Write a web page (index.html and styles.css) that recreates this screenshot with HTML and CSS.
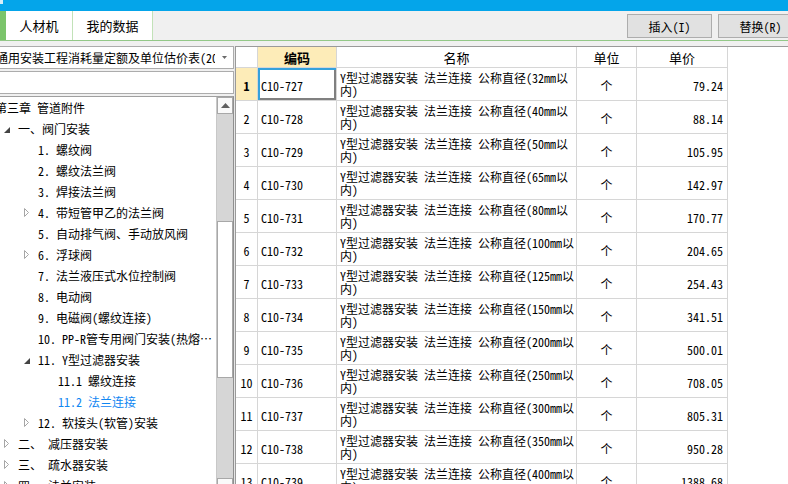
FILE: index.html
```html
<!DOCTYPE html>
<html lang="zh-CN">
<head>
<meta charset="utf-8">
<title>定额</title>
<link rel="stylesheet" href="styles.css">
</head>
<body>
<div class="app">
  <div class="titlebar"><span class="tb-mark"></span></div>
  <div class="tabbar">
    <div class="tab-accent"></div>
    <div class="tab tab-rcj">人材机</div>
    <div class="tab tab-my">我的数据</div>
    <div class="spacer"></div>
    <button class="btn btn-insert">插入(I)</button>
    <button class="btn btn-replace">替换(R)</button>
  </div>
  <div class="main">
    <div class="left">
      <div class="combo">
        <span class="combo-text">通用安装工程消耗量定额及单位估价表(2020)</span>
        <svg class="combo-arrow" width="5" height="3" viewBox="0 0 5 3"><polygon points="0,0 5,0 2.5,3" fill="#6a6a6a"/></svg>
      </div>
      <div class="search"></div>
      <div class="tree">
        <div class="tree-list">
          <div class="node lv0"><span class="txt">第三章 管道附件</span></div>
          <div class="node lv1"><span class="arw"><svg width="6" height="6" viewBox="0 0 6 6" class="exp"><polygon points="6,0 6,6 0,6" fill="#444"/></svg></span><span class="txt">一、阀门安装</span></div>
          <div class="node lv2"><span class="arw"></span><span class="txt">1. 螺纹阀</span></div>
          <div class="node lv2"><span class="arw"></span><span class="txt">2. 螺纹法兰阀</span></div>
          <div class="node lv2"><span class="arw"></span><span class="txt">3. 焊接法兰阀</span></div>
          <div class="node lv2"><span class="arw"><svg width="5" height="9" viewBox="0 0 5 9"><polygon points="0.5,0.5 4.5,4.5 0.5,8.5" fill="#fff" stroke="#a6a6a6"/></svg></span><span class="txt">4. 带短管甲乙的法兰阀</span></div>
          <div class="node lv2"><span class="arw"></span><span class="txt">5. 自动排气阀、手动放风阀</span></div>
          <div class="node lv2"><span class="arw"><svg width="5" height="9" viewBox="0 0 5 9"><polygon points="0.5,0.5 4.5,4.5 0.5,8.5" fill="#fff" stroke="#a6a6a6"/></svg></span><span class="txt">6. 浮球阀</span></div>
          <div class="node lv2"><span class="arw"></span><span class="txt">7. 法兰液压式水位控制阀</span></div>
          <div class="node lv2"><span class="arw"></span><span class="txt">8. 电动阀</span></div>
          <div class="node lv2"><span class="arw"></span><span class="txt">9. 电磁阀(螺纹连接)</span></div>
          <div class="node lv2"><span class="arw"></span><span class="txt">10. PP-R管专用阀门安装(热熔…</span></div>
          <div class="node lv2"><span class="arw"><svg width="6" height="6" viewBox="0 0 6 6" class="exp"><polygon points="6,0 6,6 0,6" fill="#444"/></svg></span><span class="txt">11. Y型过滤器安装</span></div>
          <div class="node lv3"><span class="arw"></span><span class="txt">11.1 螺纹连接</span></div>
          <div class="node lv3 selected"><span class="arw"></span><span class="txt">11.2 法兰连接</span></div>
          <div class="node lv2"><span class="arw"><svg width="5" height="9" viewBox="0 0 5 9"><polygon points="0.5,0.5 4.5,4.5 0.5,8.5" fill="#fff" stroke="#a6a6a6"/></svg></span><span class="txt">12. 软接头(软管)安装</span></div>
          <div class="node lv1"><span class="arw"><svg width="5" height="9" viewBox="0 0 5 9"><polygon points="0.5,0.5 4.5,4.5 0.5,8.5" fill="#fff" stroke="#a6a6a6"/></svg></span><span class="txt">二、 减压器安装</span></div>
          <div class="node lv1"><span class="arw"><svg width="5" height="9" viewBox="0 0 5 9"><polygon points="0.5,0.5 4.5,4.5 0.5,8.5" fill="#fff" stroke="#a6a6a6"/></svg></span><span class="txt">三、 疏水器安装</span></div>
          <div class="node lv1"><span class="arw"><svg width="5" height="9" viewBox="0 0 5 9"><polygon points="0.5,0.5 4.5,4.5 0.5,8.5" fill="#fff" stroke="#a6a6a6"/></svg></span><span class="txt">四、 法兰安装</span></div>
        </div>
        <div class="vscroll">
          <div class="sb-btn sb-up"><svg width="9" height="5" viewBox="0 0 9 5"><polygon points="0,5 9,5 4.5,0" fill="#606060"/></svg></div>
          <div class="sb-thumb"></div>
          <div class="sb-btn sb-down"><svg width="9" height="5" viewBox="0 0 9 5"><polygon points="0,0 9,0 4.5,5" fill="#606060"/></svg></div>
        </div>
      </div>
    </div>
    <div class="splitter"></div>
    <div class="grid">
      <div class="row hrow">
        <div class="cell c-rh"></div>
        <div class="cell c-code h-active">编码</div>
        <div class="cell c-name">名称</div>
        <div class="cell c-unit">单位</div>
        <div class="cell c-price">单价</div>
      </div>
      <div class="row"><div class="cell c-rh rh-active">1</div><div class="cell c-code focus">C10-727</div><div class="cell c-name"><span>Y型过滤器安装 法兰连接 公称直径(32mm以</span><span>内)</span></div><div class="cell c-unit">个</div><div class="cell c-price">79.24</div></div>
      <div class="row"><div class="cell c-rh">2</div><div class="cell c-code">C10-728</div><div class="cell c-name"><span>Y型过滤器安装 法兰连接 公称直径(40mm以</span><span>内)</span></div><div class="cell c-unit">个</div><div class="cell c-price">88.14</div></div>
      <div class="row"><div class="cell c-rh">3</div><div class="cell c-code">C10-729</div><div class="cell c-name"><span>Y型过滤器安装 法兰连接 公称直径(50mm以</span><span>内)</span></div><div class="cell c-unit">个</div><div class="cell c-price">105.95</div></div>
      <div class="row"><div class="cell c-rh">4</div><div class="cell c-code">C10-730</div><div class="cell c-name"><span>Y型过滤器安装 法兰连接 公称直径(65mm以</span><span>内)</span></div><div class="cell c-unit">个</div><div class="cell c-price">142.97</div></div>
      <div class="row"><div class="cell c-rh">5</div><div class="cell c-code">C10-731</div><div class="cell c-name"><span>Y型过滤器安装 法兰连接 公称直径(80mm以</span><span>内)</span></div><div class="cell c-unit">个</div><div class="cell c-price">170.77</div></div>
      <div class="row"><div class="cell c-rh">6</div><div class="cell c-code">C10-732</div><div class="cell c-name"><span>Y型过滤器安装 法兰连接 公称直径(100mm以</span><span>内)</span></div><div class="cell c-unit">个</div><div class="cell c-price">204.65</div></div>
      <div class="row"><div class="cell c-rh">7</div><div class="cell c-code">C10-733</div><div class="cell c-name"><span>Y型过滤器安装 法兰连接 公称直径(125mm以</span><span>内)</span></div><div class="cell c-unit">个</div><div class="cell c-price">254.43</div></div>
      <div class="row"><div class="cell c-rh">8</div><div class="cell c-code">C10-734</div><div class="cell c-name"><span>Y型过滤器安装 法兰连接 公称直径(150mm以</span><span>内)</span></div><div class="cell c-unit">个</div><div class="cell c-price">341.51</div></div>
      <div class="row"><div class="cell c-rh">9</div><div class="cell c-code">C10-735</div><div class="cell c-name"><span>Y型过滤器安装 法兰连接 公称直径(200mm以</span><span>内)</span></div><div class="cell c-unit">个</div><div class="cell c-price">500.01</div></div>
      <div class="row"><div class="cell c-rh">10</div><div class="cell c-code">C10-736</div><div class="cell c-name"><span>Y型过滤器安装 法兰连接 公称直径(250mm以</span><span>内)</span></div><div class="cell c-unit">个</div><div class="cell c-price">708.05</div></div>
      <div class="row"><div class="cell c-rh">11</div><div class="cell c-code">C10-737</div><div class="cell c-name"><span>Y型过滤器安装 法兰连接 公称直径(300mm以</span><span>内)</span></div><div class="cell c-unit">个</div><div class="cell c-price">805.31</div></div>
      <div class="row"><div class="cell c-rh">12</div><div class="cell c-code">C10-738</div><div class="cell c-name"><span>Y型过滤器安装 法兰连接 公称直径(350mm以</span><span>内)</span></div><div class="cell c-unit">个</div><div class="cell c-price">950.28</div></div>
      <div class="row"><div class="cell c-rh">13</div><div class="cell c-code">C10-739</div><div class="cell c-name"><span>Y型过滤器安装 法兰连接 公称直径(400mm以</span><span>内)</span></div><div class="cell c-unit">个</div><div class="cell c-price">1388.68</div></div>
    </div>
  </div>
</div>
</body>
</html>
```

FILE: styles.css
```css
* { box-sizing: border-box; }
html, body { margin: 0; padding: 0; }
body {
  font-family: "Noto Sans Mono CJK SC", "Noto Sans CJK SC", "DejaVu Sans Mono", monospace;
  font-size: 12px;
  color: #000;
  background: #f0f0f0;
}
.app {
  width: 788px;
  height: 484px;
  overflow: hidden;
  display: flex;
  flex-direction: column;
  background: #f0f0f0;
}
.titlebar {
  height: 11px;
  flex: none;
  background: #04a5ea;
  position: relative;
}
.tb-mark {
  position: absolute;
  left: 0;
  top: 0;
  width: 3px;
  height: 4px;
  background: #d8eefa;
}
.tabbar {
  height: 30px;
  flex: none;
  display: flex;
  background: #f0f0f0;
  border-bottom: 1px solid #93c888;
}
.tab-accent { width: 6px; background: #7bc46b; flex: none; }
.tab {
  flex: none;
  background: #fff;
  border-right: 1px solid #c2e2b8;
  display: flex;
  align-items: center;
  justify-content: center;
  font-family: "Noto Sans CJK SC", sans-serif;
  font-size: 13px;
  padding-bottom: 1px;
}
.tab-rcj { width: 67px; }
.tab-my { width: 80px; }
.spacer { flex: 1; }
.btn {
  flex: none;
  width: 85px;
  height: 24px;
  margin-top: 3px;
  border: 1px solid #adadad;
  background: #e1e1e1;
  font-family: inherit;
  font-size: 12px;
  color: #000;
  padding: 0;
}
.btn-insert { margin-right: 6px; }
.btn-replace { margin-right: -15px; }

.main {
  flex: 1;
  display: flex;
  padding-top: 5px;
  min-height: 0;
}
.left {
  width: 234px;
  flex: none;
  display: flex;
  flex-direction: column;
  gap: 2px;
}
.combo {
  height: 23px;
  flex: none;
  background: #fff;
  border: 1px solid #acacac;
  border-left: none;
  display: flex;
  align-items: center;
  white-space: nowrap;
  overflow: hidden;
}
.combo-text {
  flex: 1;
  min-width: 0;
  overflow: hidden;
  margin-left: -4px;
}
.combo-arrow { flex: none; margin-left: 7px; margin-right: 6px; }
.search {
  height: 23px;
  flex: none;
  background: #fff;
  border: 1px solid #acacac;
  border-left: none;
}
.tree {
  flex: 1;
  min-height: 0;
  display: flex;
  background: #fff;
  border-top: 1px solid #a0a0a0;
  border-right: 1px solid #8f8f8f;
  overflow: hidden;
}
.tree-list {
  flex: 1;
  min-width: 0;
  overflow: hidden;
}
.node {
  height: 21px;
  display: flex;
  align-items: center;
  white-space: nowrap;
}
.node .arw {
  width: 14px;
  flex: none;
  display: flex;
  align-items: center;
}
.node .arw .exp { margin-top: 2px; }
.lv0 { padding-left: 0; }
.lv0 .txt { margin-left: -5px; }
.lv1 { padding-left: 4px; }
.lv2 { padding-left: 24px; }
.lv3 { padding-left: 44px; }
.node.selected .txt { color: #0f86f2; }

.vscroll {
  width: 17px;
  flex: none;
  display: flex;
  flex-direction: column;
  background: #d6d6d6;
  border-left: 1px solid #c8c8c8;
}
.sb-btn {
  height: 17px;
  flex: none;
  background: #fafafa;
  border: 1px solid #a8a8a8;
  display: flex;
  align-items: center;
  justify-content: center;
}
.sb-thumb {
  height: 157px;
  flex: none;
  margin-top: 107px;
  background: #fff;
  border: 1px solid #a8a8a8;
}
.sb-down { margin-top: 100px; }

.splitter { width: 1px; flex: none; background: #e6e6e6; }

.grid {
  flex: 1;
  min-width: 0;
  background: #fff;
  border-top: 1px solid #9a9a9a;
  border-left: 1px solid #9a9a9a;
  overflow: hidden;
}
.row {
  display: flex;
  height: 33px;
}
.row.hrow { height: 21px; }
.cell {
  flex: none;
  border-right: 1px solid #d6d6d6;
  border-bottom: 1px solid #d6d6d6;
  display: flex;
  align-items: center;
  white-space: nowrap;
  overflow: hidden;
  padding-top: 3px;
}
.hrow .cell {
  justify-content: center;
  align-items: center;
  flex-direction: row;
  font-family: "Noto Sans CJK SC", sans-serif;
  font-size: 13px;
  padding-top: 0;
  padding-left: 0;
  padding-right: 0;
}
.c-rh { width: 22px; justify-content: center; }
.c-code { width: 79px; padding-left: 3px; }
.c-name {
  width: 240px;
  padding-left: 3px;
  padding-top: 0;
  flex-direction: column;
  align-items: flex-start;
  justify-content: center;
  line-height: 13px;
}
.c-unit { width: 60px; justify-content: center; }
.c-price { width: 91px; justify-content: flex-end; padding-right: 4px; }
.hrow .h-active { background: #fdecb8; font-weight: bold; }
.rh-active { background: #fdecb8; font-weight: bold; }
.focus {
  box-shadow: inset 2px 2px 0 #35a1dc, inset -2px -2px 0 #808080;
}
```
